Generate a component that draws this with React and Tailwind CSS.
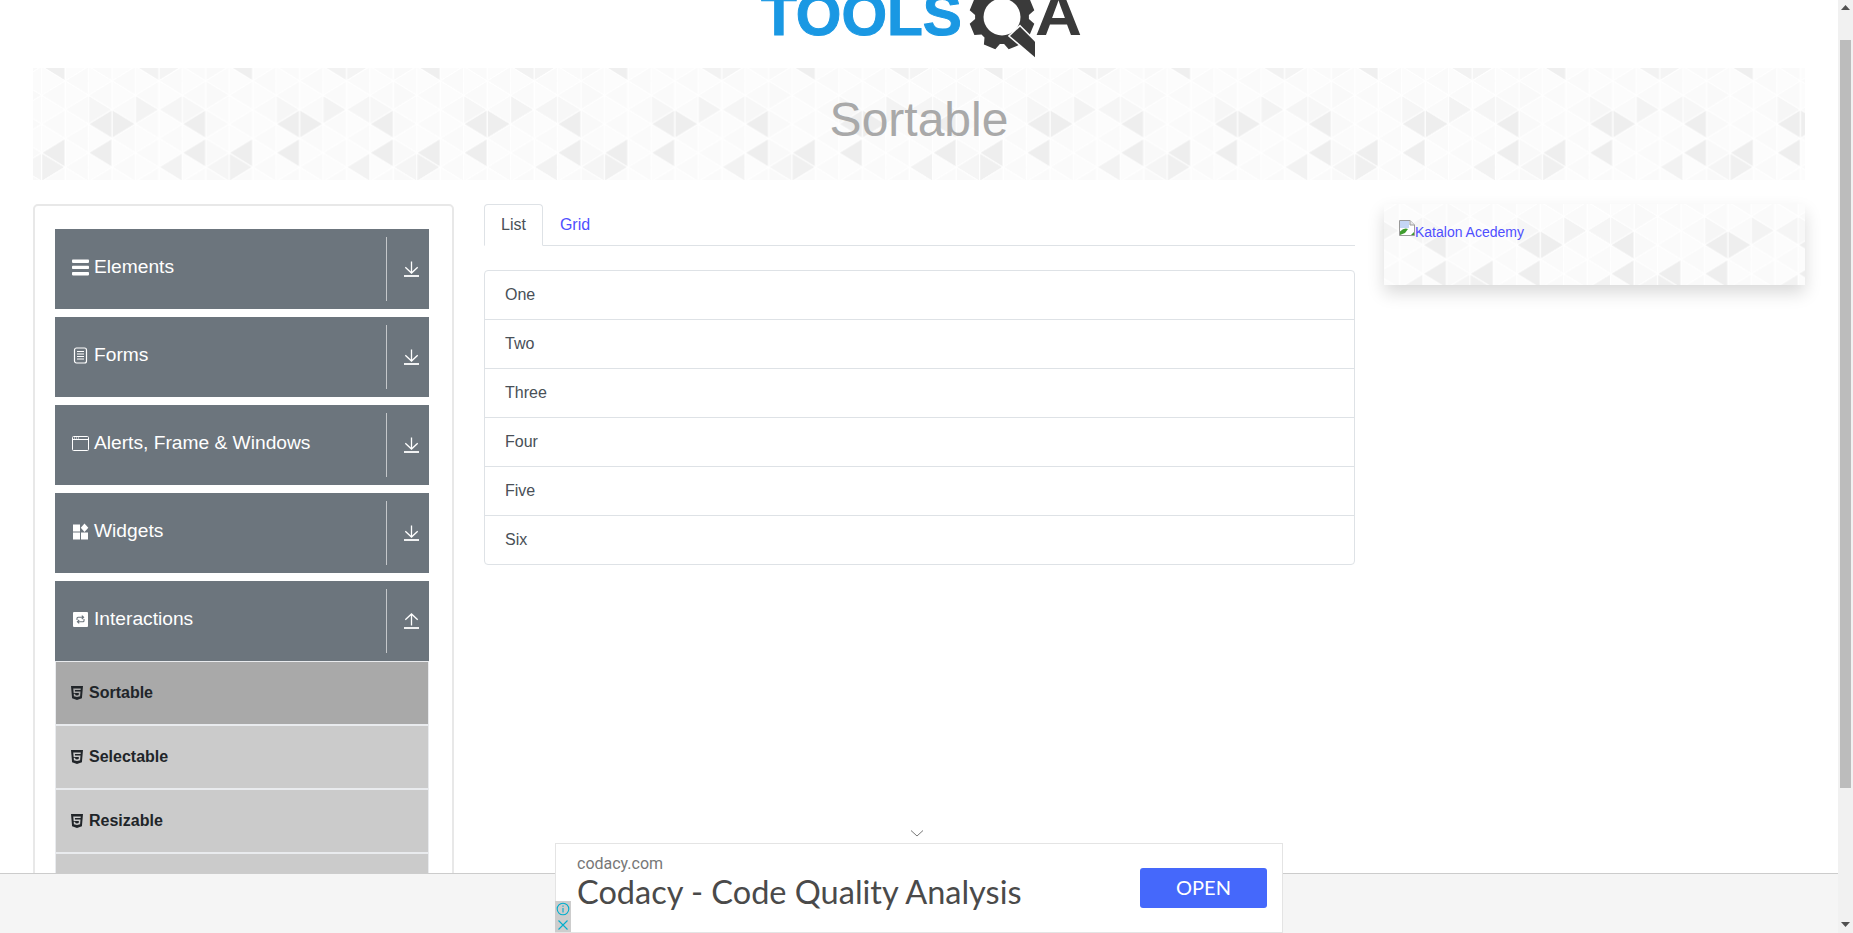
import { FaHtml5 } from 'react-icons/fa';

const LINK = 'text-[#4f4fff]';

// lattice of the background image, one tile is 8 columns wide
const colX = (k) => 8.7 + 23.45 * k;
const nodeY = (k, n) => ((k % 2 === 0 ? -1.6 : 12.8) + 28.8 * n);
const wrap = (k) => ((k % 8) + 8) % 8;

// [flat column, apex column, apex node, colour]
const DARK = [
  [3, 2, 2, '#eeeeee'], [3, 4, 2, '#eeeeee'], [4, 5, 1, '#f3f3f3'], [6, 5, 1, '#f5f5f5'],
  [6, 7, 1, '#f7f7f7'], [7, 6, 2, '#eeeeee'], [3, 2, 3, '#eeeeee'], [7, 6, 3, '#eeeeee'],
  [1, 0, 3, '#eeeeee'], [0, 1, 3, '#f0f0f0'], [6, 5, 3, '#f2f2f2'], [0, 7, 3, '#f5f5f5'],
  [1, 0, 0, '#efefef'], [5, 4, 0, '#f2f2f2'], [5, 6, 0, '#f4f4f4'], [2, 3, 1, '#f6f6f6'],
];
const SHADES = ['#fafafa', '#fbfbfb', '#fafafa', '#fcfcfc', '#f9f9f9'];

function fillFor(flat, apex, n) {
  const hit = DARK.find((d) => d[0] === wrap(flat) && d[1] === wrap(apex) && d[2] === n);
  if (hit) return hit[3];
  return SHADES[(wrap(flat) * 7 + wrap(apex) * 3 + (n + 2) * 5) % SHADES.length];
}

function tileTriangles() {
  const out = [];
  for (let k = -1; k < 9; k++) {
    for (let n = -1; n < 6; n++) {
      [[k, k + 1], [k + 1, k]].forEach(([flat, apex]) => {
        const y = nodeY(wrap(apex), n);
        out.push({
          key: `${flat}-${apex}-${n}`,
          points: `${colX(flat)},${y - 14.4} ${colX(flat)},${y + 14.4} ${colX(apex)},${y}`,
          fill: fillFor(flat, apex, n),
        });
      });
    }
  }
  return out;
}

function TrianglePattern({ id, dx = 0, dy = 0 }) {
  return (
    <svg className="absolute inset-0 w-full h-full" aria-hidden="true">
      <defs>
        <pattern id={id} x={dx} y={dy} width="187.6" height="115.2" patternUnits="userSpaceOnUse">
          {tileTriangles().map((t) => (
            <polygon key={t.key} points={t.points} fill={t.fill} stroke="#ffffff" strokeWidth="1" />
          ))}
        </pattern>
      </defs>
      <rect width="100%" height="100%" fill={`url(#${id})`} />
    </svg>
  );
}

function gearPath(cx, cy, outer, inner, teeth) {
  const pts = [];
  const step = (Math.PI * 2) / teeth;
  for (let i = 0; i < teeth; i++) {
    const a = i * step + step / 2;
    [[-0.5, inner], [-0.3, outer], [0.3, outer], [0.5, inner]].forEach(([f, r]) => {
      pts.push(`${(cx + r * Math.sin(a + f * step * 0.8)).toFixed(1)},${(cy - r * Math.cos(a + f * step * 0.8)).toFixed(1)}`);
    });
  }
  return `M${pts.join('L')}Z`;
}

const Logo = () => (
  <svg width="340" height="68" viewBox="0 0 340 68" className="shrink-0">
    <text x="12" y="35" fontSize="60" fontWeight="700" fill="#1a98e3" stroke="#1a98e3" strokeWidth="1" textLength="201" lengthAdjust="spacingAndGlyphs" fontFamily="'Liberation Sans', sans-serif">TOOLS</text>
    <path d={gearPath(253, 17, 33, 27, 8)} fill="#3a3a3a" />
    <circle cx="253" cy="17" r="18.5" fill="#ffffff" />
    <polygon points="271,26.7 286,41.7 286,57.3 261,36" fill="#3a3a3a" stroke="#ffffff" strokeWidth="3" paintOrder="stroke" />
    <text x="286" y="35" fontSize="60" fontWeight="700" fill="#3a3a3a" textLength="47" lengthAdjust="spacingAndGlyphs" fontFamily="'Liberation Sans', sans-serif">A</text>
  </svg>
);

const BarsIcon = () => (
  <svg width="17" height="17" viewBox="0 0 17 17" fill="#fff">
    <rect x="0" y="0.5" width="17" height="3.4" rx="0.8" />
    <rect x="0" y="6.7" width="17" height="3.4" rx="0.8" />
    <rect x="0" y="13" width="17" height="3.4" rx="0.8" />
  </svg>
);

const FormIcon = () => (
  <svg width="17" height="17" viewBox="0 0 17 17" fill="none" stroke="#fff">
    <rect x="2.5" y="1" width="12" height="15" rx="2" strokeWidth="1.2" />
    <path d="M5 4.5h7M5 7h7M5 9.5h7M5 12h7" strokeWidth="1" />
  </svg>
);

const WindowIcon = () => (
  <svg width="17" height="17" viewBox="0 0 17 17" fill="none" stroke="#fff">
    <rect x="0.5" y="1.5" width="16" height="14" rx="1" strokeWidth="1" />
    <path d="M0.5 4.5h16" strokeWidth="1" />
    <path d="M2 3h1M4 3h1M6 3h1" strokeWidth="1" />
  </svg>
);

const WidgetIcon = () => (
  <svg width="17" height="17" viewBox="0 0 17 17" fill="#fff">
    <rect x="1" y="1.5" width="7" height="7" />
    <polygon points="12.5,0.5 16.3,4.8 12.5,9 8.8,4.8" />
    <rect x="1" y="9.5" width="7" height="7" />
    <rect x="9" y="9.5" width="7" height="7" />
  </svg>
);

const RepeatIcon = () => (
  <svg width="17" height="17" viewBox="0 0 17 17">
    <rect x="1" y="1" width="15" height="15" rx="1" fill="#fff" />
    <path d="M5 9V7.3Q5 6.3 6 6.3H11.4M9.8 4.6l1.8 1.7-1.8 1.7M12 8v1.7q0 1-1 1H5.6M7.2 9l-1.8 1.7 1.8 1.7" fill="none" stroke="#6c757d" strokeWidth="1.1" />
  </svg>
);

const ArrowIcon = ({ up }) => (
  <svg width="15" height="16" viewBox="0 0 15 16" fill="none" stroke="#fff" strokeWidth="1.3">
    {up ? <path d="M7.5 12.5V1M1.3 6.8 7.5 1l6.2 5.8" /> : <path d="M7.5 0.5V12M1.3 6.2 7.5 12l6.2-5.8" />}
    <path d="M0 15h15" strokeWidth="1.8" />
  </svg>
);

const BrokenImage = () => (
  <svg width="16" height="16" viewBox="0 0 16 16" className="shrink-0">
    <path d="M0.5 0.5H11L15.5 5V15.5H0.5Z" fill="#fff" stroke="#9a9a9a" />
    <path d="M11 0.5V5H15.5" fill="#e8e8e8" stroke="#9a9a9a" />
    <rect x="1" y="1" width="9" height="7" fill="#c5d6f5" />
    <path d="M1 15V11.5Q5 7.5 9 9L6 13Z" fill="#3f9d2e" />
    <path d="M12 15l3-3v3Z" fill="#3f9d2e" />
  </svg>
);

const groups = [
  { name: 'Elements', icon: <BarsIcon /> },
  { name: 'Forms', icon: <FormIcon /> },
  { name: 'Alerts, Frame & Windows', icon: <WindowIcon /> },
  { name: 'Widgets', icon: <WidgetIcon /> },
  { name: 'Interactions', icon: <RepeatIcon />, open: true },
];

const subItems = [
  { name: 'Sortable', active: true },
  { name: 'Selectable' },
  { name: 'Resizable' },
  { name: 'Droppable' },
];

const rows = ['One', 'Two', 'Three', 'Four', 'Five', 'Six'];

function Sidebar() {
  return (
    <aside className="mr-[30px] w-[421px] shrink-0 rounded-[5px] border-2 border-[#e8e8e8] pt-[23px] pr-[23px] pb-[24px] pl-[20px]">
      <div className="flex flex-col gap-2">
        {groups.map((g) => (
          <div key={g.name} className="flex h-20 bg-[#6c757d] text-white">
            <div className="flex flex-1 items-center gap-[5px] pb-[3px] pl-[17px] text-[19.2px]">
              {g.icon}
              <span>{g.name}</span>
            </div>
            <div className="my-2 flex w-[43px] items-center border-l border-[#c4c7ca] pl-[17px]">
              <ArrowIcon up={g.open} />
            </div>
          </div>
        ))}
      </div>
      <ul>
        {subItems.map((item) => (
          <li
            key={item.name}
            className={`flex h-16 items-center gap-[4px] border border-[#e9ebee] pl-[13px] text-base font-bold text-[#212529] ${item.active ? 'bg-[#a9a9a9]' : 'bg-[#cbcbcb]'}`}
          >
            <FaHtml5 size={16} />
            <span>{item.name}</span>
          </li>
        ))}
      </ul>
    </aside>
  );
}

function Content() {
  return (
    <section className="mr-[29px] min-w-0 flex-1 text-base text-[#495057]">
      <div className="flex border-b border-[#dee2e6]">
        <div className="-mb-px rounded-t border border-[#dee2e6] border-b-white bg-white px-4 py-2">List</div>
        <div className={`-mb-px border border-transparent px-4 py-2 ${LINK}`}>Grid</div>
      </div>
      <ul className="mt-6 rounded border border-[#dee2e6]">
        {rows.map((r, i) => (
          <li key={r} className={`px-5 py-3 ${i > 0 ? 'h-[49px] border-t border-[#dee2e6]' : 'h-[48px]'}`}>{r}</li>
        ))}
      </ul>
    </section>
  );
}

function KatalonAd() {
  return (
    <aside className="relative h-[81px] w-[421px] shrink-0 shadow-[0_8px_16px_rgba(0,0,0,0.15)]">
      <TrianglePattern id="ad-bg" dx={77.3} dy={-15} />
      <div className={`relative flex items-start px-[15px] pt-[16px] text-sm ${LINK}`}>
        <BrokenImage />
        <span className="mt-[3px] leading-[18px]">Katalon Acedemy</span>
      </div>
    </aside>
  );
}

function BottomAd() {
  return (
    <div className="relative -mt-[31px] flex h-[90px] w-[728px] shrink-0 items-center justify-between border border-[#e4e4e4] bg-white pr-[15px] pl-[21px]">
      <svg width="14" height="7" viewBox="0 0 14 7" className="absolute -top-[14px] left-[354px]" fill="none" stroke="#777777">
        <path d="M1 0.5 7 6 13 0.5" />
      </svg>
      <div className="-mt-[11px] flex flex-col [font-family:Roboto,sans-serif]">
        <span className="text-[16px] leading-[20px] text-[#777777]">codacy.com</span>
        <span className="-mt-px text-[32.5px] leading-[38px] text-[#4a4a4a] [font-family:Lato,sans-serif]">Codacy - Code Quality Analysis</span>
      </div>
      <div className="flex h-[40px] w-[127px] items-center justify-center rounded-[3px] bg-[#4568fb] pb-[3px] text-[20px] text-white [font-family:Lato,sans-serif]">OPEN</div>
      <div className="absolute bottom-0 -left-px flex w-[16px] flex-col">
        <div className="flex h-[16px] items-center justify-center bg-[#cdcdcd]">
          <svg width="14" height="14" viewBox="0 0 14 14" fill="none" stroke="#00aecd" strokeWidth="1.1">
            <circle cx="7" cy="7" r="5.8" />
            <path d="M7 6v4.5M7 3.4v1.4" />
          </svg>
        </div>
        <div className="flex h-[15px] items-center justify-center bg-[#cdcdcd]">
          <svg width="12" height="12" viewBox="0 0 12 12" fill="none" stroke="#00aecd" strokeWidth="1.1">
            <path d="M1.5 1.5 10.5 10.5M10.5 1.5 1.5 10.5" />
          </svg>
        </div>
      </div>
    </div>
  );
}

function Scrollbar() {
  return (
    <div className="relative w-[15px] shrink-0 bg-[#f1f1f1] px-[2px] pt-[40px]">
      <svg width="9" height="5" viewBox="0 0 9 5" className="absolute top-[5px] left-[3px]" fill="#505050"><polygon points="4.5,0 9,5 0,5" /></svg>
      <div className="h-[748px] bg-[#bcbcbc]" />
      <svg width="9" height="5" viewBox="0 0 9 5" className="absolute bottom-[6px] left-[3px]" fill="#505050"><polygon points="0,0 9,0 4.5,5" /></svg>
    </div>
  );
}

export default function App() {
  return (
    <div className="relative flex h-screen w-full overflow-hidden bg-white [font-family:'Liberation_Sans',Arial,sans-serif]">
      <main className="min-w-0 flex-1 overflow-hidden">
        <header className="flex h-[68px] justify-center overflow-hidden">
          <Logo />
        </header>
        <div className="px-[33px]">
          <div className="relative flex h-[112px] items-center justify-center pb-[9px]">
            <TrianglePattern id="banner-bg" />
            <h1 className="relative text-5xl font-medium text-[#a9a9a9]">Sortable</h1>
          </div>
          <div className="mt-6 flex items-start">
            <Sidebar />
            <Content />
            <KatalonAd />
          </div>
        </div>
      </main>
      <Scrollbar />
      <footer className="absolute right-[15px] bottom-0 left-0 flex h-[60px] justify-center border-t border-[#cccccc] bg-[#f5f5f5]">
        <BottomAd />
      </footer>
    </div>
  );
}
